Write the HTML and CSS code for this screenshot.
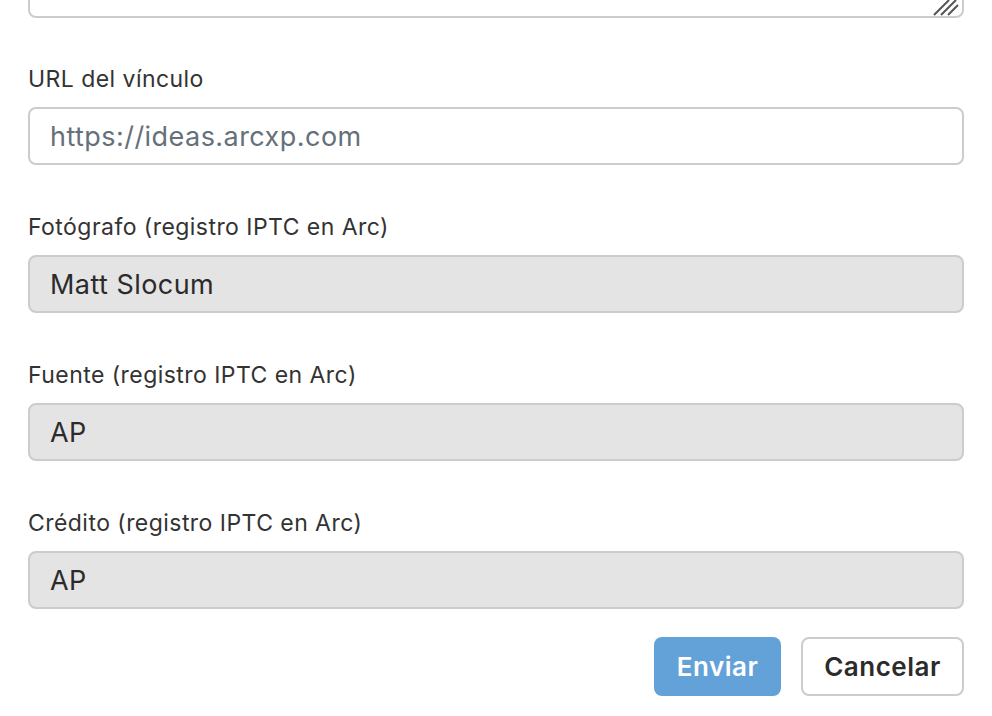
FILE: index.html
```html
<!DOCTYPE html>
<html lang="es">
<head>
  <meta charset="UTF-8">
  <title>Imagen</title>
  <link rel="stylesheet" href="styles.css">
</head>
<body>
  <form class="form">
    <div class="field field-first">
      <div class="text-wrap">
        <textarea class="text-area"></textarea>
        <svg class="grip" width="26" height="17" viewBox="0 0 26 17">
          <path d="M1 16 L16 1 M8 16 L23 1 M15 16 L25 6" stroke="#555" stroke-width="2" fill="none"/>
        </svg>
      </div>
    </div>
    <div class="field">
      <label for="url">URL del vínculo</label>
      <input type="text" id="url" placeholder="https://ideas.arcxp.com">
    </div>
    <div class="field">
      <label for="photographer">Fotógrafo (registro IPTC en Arc)</label>
      <input type="text" id="photographer" value="Matt Slocum" disabled>
    </div>
    <div class="field">
      <label for="source">Fuente (registro IPTC en Arc)</label>
      <input type="text" id="source" value="AP" disabled>
    </div>
    <div class="field">
      <label for="credit">Crédito (registro IPTC en Arc)</label>
      <input type="text" id="credit" value="AP" disabled>
    </div>
    <div class="actions">
      <button type="button" class="btn btn-primary">Enviar</button>
      <button type="button" class="btn btn-secondary">Cancelar</button>
    </div>
  </form>
</body>
</html>
```

FILE: styles.css
```css
body{
  margin: 0;
  background: #fff;
  font-family: Inter, "Liberation Sans", Arial, sans-serif;
  color: #333;
}
.form{
  padding: 0 28px;
}
.field{
  display: flex;
  flex-direction: column;
  margin-bottom: 47px;
}
.field-first{
  margin-top: -60px;
  margin-bottom: 46px;
}
.field label{
  font-size: 23px;
  letter-spacing: 0.45px;
  line-height: 30px;
  margin-bottom: 13px;
  color: #333;
}
.text-wrap{
  position: relative;
  height: 78px;
}
.text-area{
  display: block;
  width: 100%;
  height: 78px;
  border: 2px solid #ccc;
  border-radius: 8px;
  box-sizing: border-box;
  resize: none;
}
.grip{
  position: absolute;
  right: 5px;
  bottom: 2px;
}
.field input{
  height: 58px;
  box-sizing: border-box;
  border: 2px solid #ccc;
  border-radius: 8px;
  padding: 0 20px;
  font-family: inherit;
  font-size: 27px;
  letter-spacing: 0.45px;
  color: #333;
  background: #fff;
}
.field input::placeholder{
  color: #65707a;
}
.field input:disabled{
  background: #e4e4e4;
  color: #2b2b2b;
  -webkit-text-fill-color: #2b2b2b;
  opacity: 1;
}
.actions{
  display: flex;
  justify-content: flex-end;
  gap: 20px;
  margin-top: -19px;
}
.btn{
  height: 59px;
  border-radius: 8px;
  font-family: inherit;
  font-size: 26px;
  font-weight: 600;
  letter-spacing: 0.5px;
  padding: 0;
  box-sizing: border-box;
}
.btn-primary{
  width: 127px;
  background: #63a2d8;
  color: #fff;
  border: none;
}
.btn-secondary{
  width: 163px;
  background: #fff;
  color: #2b2b2b;
  border: 2px solid #ccc;
}
```
